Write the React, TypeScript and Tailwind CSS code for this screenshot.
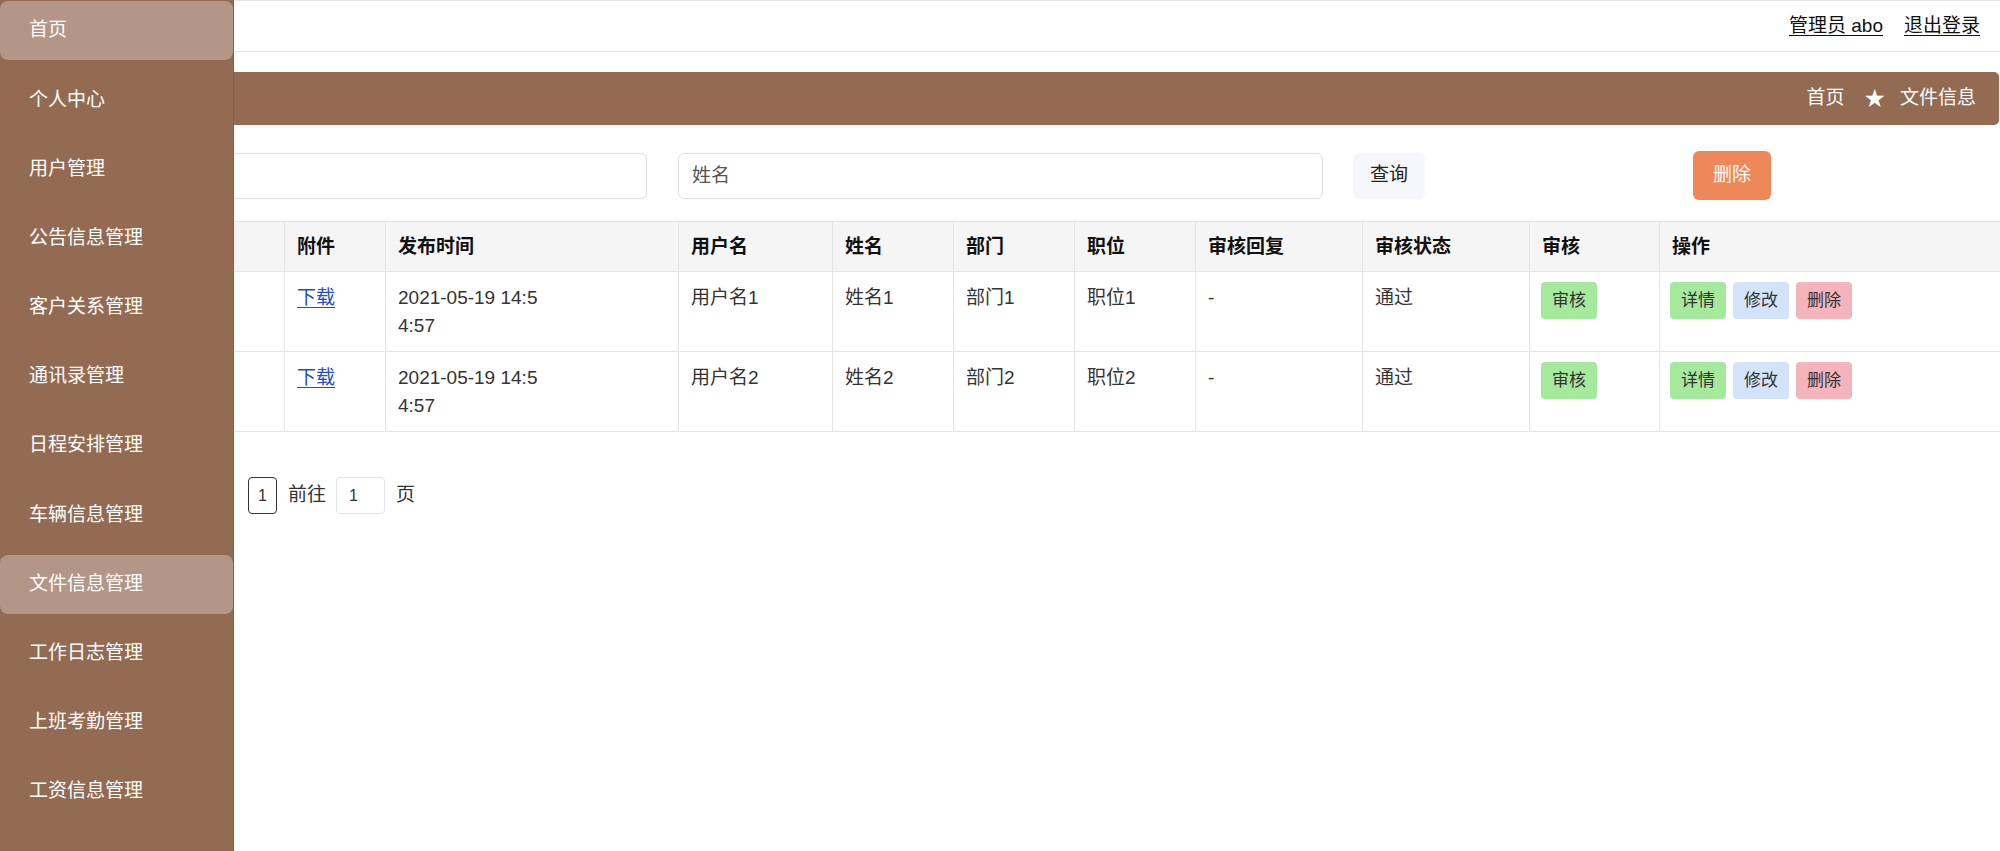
const menu = [
  "首页",
  "个人中心",
  "用户管理",
  "公告信息管理",
  "客户关系管理",
  "通讯录管理",
  "日程安排管理",
  "车辆信息管理",
  "文件信息管理",
  "工作日志管理",
  "上班考勤管理",
  "工资信息管理",
];
const active = ["首页", "文件信息管理"];

const rows = [
  { id: 1, user: "用户名1", name: "姓名1", dept: "部门1", pos: "职位1" },
  { id: 2, user: "用户名2", name: "姓名2", dept: "部门2", pos: "职位2" },
];

const cols = [284, 101, 293, 154, 121, 121, 121, 167, 167, 130, 341];
// first column sits under the sidebar
const heads = ["", "附件", "发布时间", "用户名", "姓名", "部门", "职位", "审核回复", "审核状态", "审核", "操作"];

export default function App() {
  return (
    <div className="relative w-[2000px] h-[851px] overflow-hidden bg-white text-[#333] font-['Liberation_Sans','Noto_Sans_CJK_SC',sans-serif]">
      {/* Main */}
      <main>
        <header className="h-[52px] border-y border-[#e4e4e7] flex items-center justify-end gap-[21px] pr-[20px] text-[19px] text-[#111]">
          <a className="underline underline-offset-[3px]">管理员 abo</a>
          <a className="underline underline-offset-[3px]">退出登录</a>
        </header>

        <div className="mt-[20px] mr-px h-[53px] rounded-[5px] bg-[#936b52] flex items-center justify-end pr-[23px] text-[19px] text-white">
          <span>首页</span>
          <span className="ml-[19px] mr-[14px] text-[25px] leading-none font-['DejaVu_Sans',sans-serif]">★</span>
          <span>文件信息</span>
        </div>

        {/* Search */}
        <div className="mt-[26px] h-[49px] flex items-center pl-[2px] text-[19px]">
          <input className="w-[645px] h-[46px] rounded-[6px] border border-[#dcdfe6] px-[13px] outline-none" />
          <input
            className="ml-[31px] w-[645px] h-[46px] rounded-[6px] border border-[#dcdfe6] px-[13px] outline-none placeholder:text-[#555]"
            placeholder="姓名"
          />
          <button className="ml-[30px] w-[72px] h-[46px] rounded-[6px] bg-[#f5f7fa] text-[#222]">查询</button>
          <button className="ml-[268px] w-[78px] h-[49px] rounded-[6px] bg-[#ef8858] text-white">删除</button>
        </div>

        {/* Table */}
        <table className="mt-[21px] table-fixed border-collapse w-[2000px] text-[19px]">
          <colgroup>
            {cols.map((w, i) => (
              <col key={i} style={{ width: w }} />
            ))}
          </colgroup>
          <thead>
            <tr className="bg-[#f5f5f5] h-[50px]">
              {heads.map((h, i) => (
                <th key={i} className="border border-[#e4e4e7] px-[12px] text-left font-bold text-[#111] leading-[28px]">
                  {h}
                </th>
              ))}
            </tr>
          </thead>
          <tbody>
            {rows.map((r) => (
              <tr key={r.id} className="h-[80px] align-top leading-[28px]">
                <td className="border border-[#e4e4e7] px-[12px] pt-[12px]"></td>
                <td className="border border-[#e4e4e7] px-[12px] pt-[12px]">
                  <a className="text-[#1f4fc4] underline underline-offset-[3px]">下载</a>
                </td>
                <td className="border border-[#e4e4e7] px-[12px] pt-[12px]">
                  <div className="w-[155px] break-all">2021-05-19 14:54:57</div>
                </td>
                <td className="border border-[#e4e4e7] px-[12px] pt-[12px]">{r.user}</td>
                <td className="border border-[#e4e4e7] px-[12px] pt-[12px]">{r.name}</td>
                <td className="border border-[#e4e4e7] px-[12px] pt-[12px]">{r.dept}</td>
                <td className="border border-[#e4e4e7] px-[12px] pt-[12px]">{r.pos}</td>
                <td className="border border-[#e4e4e7] px-[12px] pt-[12px]">-</td>
                <td className="border border-[#e4e4e7] px-[12px] pt-[12px]">通过</td>
                <td className="border border-[#e4e4e7] px-[11px] pt-[10px]">
                  <button className="h-[37px] px-[11px] rounded-[4px] bg-[#a5e99c] text-[17px]">审核</button>
                </td>
                <td className="border border-[#e4e4e7] px-[10px] pt-[10px]">
                  <div className="flex gap-[7px] text-[17px]">
                    <button className="h-[37px] px-[11px] rounded-[4px] bg-[#a5e99c]">详情</button>
                    <button className="h-[37px] px-[11px] rounded-[4px] bg-[#d3e4fa]">修改</button>
                    <button className="h-[37px] px-[11px] rounded-[4px] bg-[#f4b4bd]">删除</button>
                  </div>
                </td>
              </tr>
            ))}
          </tbody>
        </table>

        {/* Pagination */}
        <div className="mt-[45px] flex items-center pl-[248px] text-[19px]">
          <span className="w-[29px] h-[37px] rounded-[4px] border border-[#333] flex items-center justify-center text-[16px]">1</span>
          <span className="ml-[11px]">前往</span>
          <input
            className="ml-[10px] w-[49px] h-[37px] rounded-[4px] border border-[#e4e4e7] px-[12px] text-[16px] outline-none"
            defaultValue="1"
          />
          <span className="ml-[11px]">页</span>
        </div>
      </main>

      {/* Sidebar overlay */}
      <aside className="absolute left-0 top-0 bottom-0 w-[234px] bg-[#936b52] border-r border-[#85604a] pt-px">
        {menu.map((m) => (
          <div
            key={m}
            className={
              "h-[59.2px] mb-[10px] rounded-[8px] flex items-center pl-[29px] text-[19px] text-white " +
              (active.includes(m) ? "bg-[#b39686]" : "")
            }
          >
            {m}
          </div>
        ))}
      </aside>
    </div>
  );
}
